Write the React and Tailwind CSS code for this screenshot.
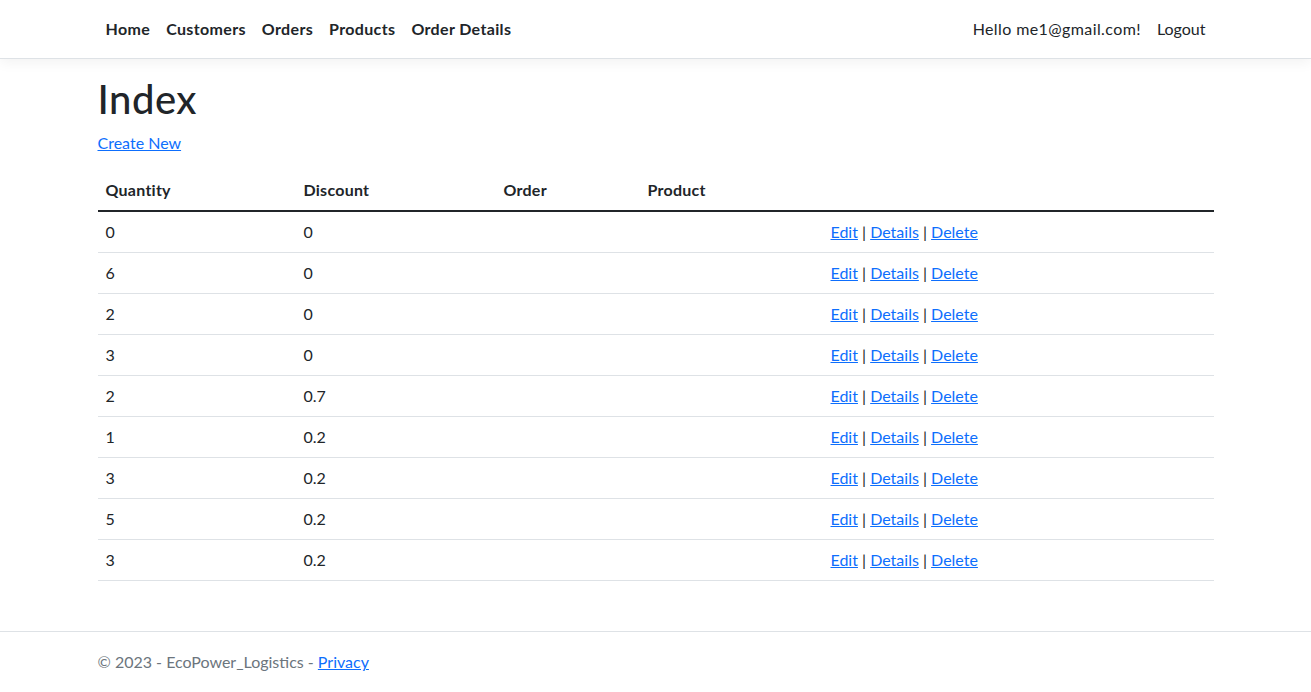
import React from 'react';

const rows = [
    { qty: 0, discount: '0' },
    { qty: 6, discount: '0' },
    { qty: 2, discount: '0' },
    { qty: 3, discount: '0' },
    { qty: 2, discount: '0.7' },
    { qty: 1, discount: '0.2' },
    { qty: 3, discount: '0.2' },
    { qty: 5, discount: '0.2' },
    { qty: 3, discount: '0.2' },
];

const font = { fontFamily: 'Lato, "Noto Sans", sans-serif' };

const App = () => {
    return (
        <div className="min-h-screen flex flex-col bg-white text-[#212529] text-base" style={font}>
            <header>
                <nav className="bg-white border-b border-[#dee2e6] shadow-[0_4px_12px_rgba(0,0,0,0.05)] mb-4">
                    <div className="w-[1140px] mx-auto px-3 py-[9px] flex justify-between items-center">
                        <ul className="flex">
                            {['Home', 'Customers', 'Orders', 'Products', 'Order Details'].map(l => (
                                <li key={l}><a href="#" className="block px-2 py-2 leading-6 font-bold tracking-[0.35px] text-[#212529]">{l}</a></li>
                            ))}
                        </ul>
                        <ul className="flex">
                            <li><span className="block px-2 py-2 leading-6 tracking-[0.4px] text-[#212529]">Hello me1@gmail.com!</span></li>
                            <li><a href="#" className="block px-2 py-2 leading-6 text-[#212529]">Logout</a></li>
                        </ul>
                    </div>
                </nav>
            </header>

            <main className="flex-1 w-[1140px] mx-auto px-3 pb-4">
                <h1 className="text-[40px] leading-[1.2] font-medium tracking-[0.5px] mb-2">Index</h1>
                <p className="mb-[15px] leading-6">
                    <a href="#" className="text-[#0d6efd] underline">Create New</a>
                </p>
                <table className="w-full border-collapse leading-6">
                    <thead>
                        <tr className="border-b-2 border-[#212529] tracking-[0.25px]">
                            <th className="text-left font-bold p-2 w-[198px]">Quantity</th>
                            <th className="text-left font-bold p-2 w-[200px]">Discount</th>
                            <th className="text-left font-bold p-2 w-[144px]">Order</th>
                            <th className="text-left font-bold p-2 w-[183px]">Product</th>
                            <th className="p-2"></th>
                        </tr>
                    </thead>
                    <tbody>
                        {rows.map((r, i) => (
                            <tr key={i} className="border-b border-[#dee2e6]">
                                <td className="p-2">{r.qty}</td>
                                <td className="p-2">{r.discount}</td>
                                <td className="p-2"></td>
                                <td className="p-2"></td>
                                <td className="p-2">
                                    <a href="#" className="text-[#0d6efd] underline">Edit</a> |{' '}
                                    <a href="#" className="text-[#0d6efd] underline">Details</a> |{' '}
                                    <a href="#" className="text-[#0d6efd] underline">Delete</a>
                                </td>
                            </tr>
                        ))}
                    </tbody>
                </table>
            </main>

            <footer className="border-t border-[#dee2e6] h-[61px] leading-[60px] whitespace-nowrap text-[#6c757d]">
                <div className="w-[1140px] mx-auto px-3">
                    &copy; 2023 - EcoPower_Logistics - <a href="#" className="text-[#0d6efd] underline">Privacy</a>
                </div>
            </footer>
        </div>
    );
};

export default App;
